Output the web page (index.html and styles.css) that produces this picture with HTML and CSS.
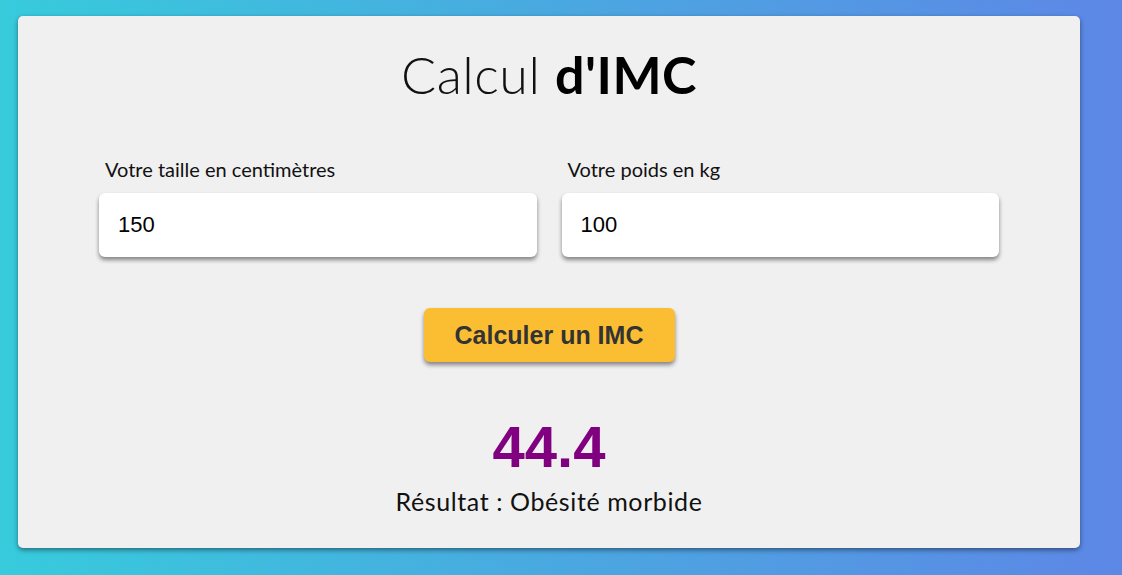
FILE: index.html
```html
<!DOCTYPE html>
<html lang="fr">
<head>
<meta charset="utf-8">
<title>Calcul d'IMC</title>
<link rel="stylesheet" href="styles.css">
</head>
<body>
<main class="card">
  <h1 class="title"><span class="light">Calcul</span> <strong>d'IMC</strong></h1>
  <form class="form">
    <div class="fields">
      <label class="field">
        <span class="label">Votre taille en centimètres</span>
        <input class="input" type="text" value="150">
      </label>
      <label class="field">
        <span class="label">Votre poids en kg</span>
        <input class="input" type="text" value="100">
      </label>
    </div>
    <button class="btn" type="button">Calculer un IMC</button>
  </form>
  <p class="value">44.4</p>
  <p class="result">Résultat : Obésité morbide</p>
</main>
</body>
</html>
```
FILE: styles.css
```css
html, body {
  margin: 0;
  height: 100%;
}
body {
  background: linear-gradient(90deg, #37cbdc 0%, #4aa8e0 50%, #5d87e6 100%);
  padding: 16px 0 0 18px;
  box-sizing: border-box;
  font-family: Lato, "Liberation Sans", sans-serif;
}
.card {
  width: 1062px;
  box-sizing: border-box;
  background: #f0f0f0;
  border-radius: 5px;
  box-shadow: 0 2px 5px rgba(0, 0, 0, 0.45);
  padding: 28px 0 33px;
  display: flex;
  flex-direction: column;
  align-items: center;
}
.title {
  margin: 0;
  font-size: 52px;
  line-height: 60px;
  font-weight: 300;
  color: #111;
  letter-spacing: 0.5px;
}
.title strong {
  font-weight: 700;
  color: #000;
}
.form {
  margin-top: 54px;
  width: 900px;
  display: flex;
  flex-direction: column;
  align-items: center;
}
.fields {
  width: 100%;
  display: flex;
  gap: 25px;
}
.field {
  flex: 1;
  display: flex;
  flex-direction: column;
}
.label {
  font-size: 20px;
  line-height: 22px;
  color: #111;
  padding-left: 6px;
  margin-bottom: 13px;
}
.input {
  height: 64px;
  box-sizing: border-box;
  border: none;
  border-radius: 6px;
  background: #fff;
  box-shadow: 0 3px 4px rgba(0, 0, 0, 0.45);
  padding: 0 19px;
  font-family: "Liberation Sans", Arial, sans-serif;
  font-size: 22px;
  color: #000;
  outline: none;
}
.btn {
  margin-top: 51px;
  width: 251px;
  height: 54px;
  border: none;
  border-radius: 6px;
  background: #fbbe33;
  box-shadow: 0 3px 4px rgba(0, 0, 0, 0.45);
  font-family: "Liberation Sans", Arial, sans-serif;
  font-weight: 700;
  font-size: 25px;
  color: #333;
  cursor: pointer;
}
.value {
  margin: 53px 0 0;
  font-family: "Liberation Sans", Arial, sans-serif;
  font-weight: 700;
  font-size: 58px;
  line-height: 64px;
  color: #800080;
}
.result {
  margin: 8px 0 0;
  font-size: 25px;
  line-height: 28px;
  font-weight: 400;
  color: #111;
  letter-spacing: 0.6px;
}
```
